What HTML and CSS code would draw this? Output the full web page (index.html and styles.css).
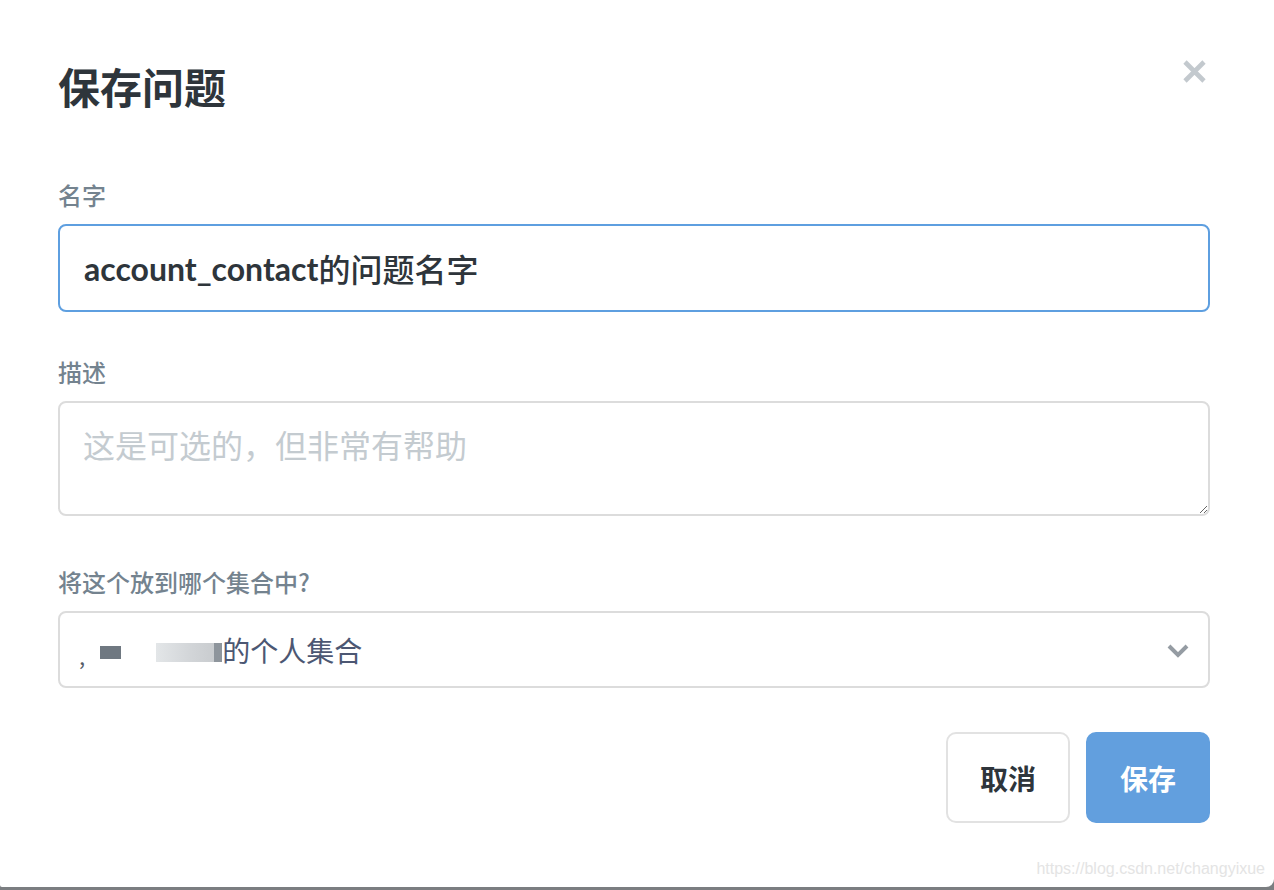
FILE: index.html
```html
<!DOCTYPE html>
<html lang="zh-CN">
<head>
<meta charset="utf-8">
<title>保存问题</title>
<link rel="stylesheet" href="styles.css">
</head>
<body>
<div class="modal">
  <div class="header">
    <h1 class="title">保存问题</h1>
    <svg class="close" width="23" height="23" viewBox="0 0 23 23" aria-label="关闭">
      <path d="M2 2 L21 21 M21 2 L2 21" stroke="#c3c9ce" stroke-width="4.6" fill="none"/>
    </svg>
  </div>
  <form class="form">
    <div class="field field-name">
      <label class="label">名字</label>
      <div class="input" contenteditable="true"><span class="latin">account_contact</span><span class="cjk">的问题名字</span></div>
    </div>
    <div class="field field-desc">
      <label class="label">描述</label>
      <textarea class="textarea" placeholder="这是可选的，但非常有帮助"></textarea>
    </div>
    <div class="field field-coll">
      <label class="label">将这个放到哪个集合中?</label>
      <div class="select">
        <span class="select-value"><span class="blur-comma">,</span><span class="blur-a"></span><span class="blur-b"></span><span class="blur-c"></span>的个人集合</span>
        <svg class="chevron" width="22" height="14" viewBox="0 0 22 14">
          <path d="M2 2 L11 11 L20 2" stroke="#959ca3" stroke-width="4" fill="none"/>
        </svg>
      </div>
    </div>
    <div class="actions">
      <button type="button" class="btn btn-cancel">取消</button>
      <button type="button" class="btn btn-save">保存</button>
    </div>
  </form>
  <div class="watermark">https://blog.csdn.net/changyixue</div>
</div>
</body>
</html>
```

FILE: styles.css
```css
* { box-sizing: border-box; }
html, body { margin: 0; padding: 0; }
body {
  background: #7b7e81;
  font-family: "Lato", "Noto Sans CJK SC", sans-serif;
  width: 1274px;
  height: 890px;
  overflow: hidden;
}
.modal {
  position: relative;
  width: 1274px;
  height: 887px;
  background: #ffffff;
  border-radius: 0 0 8px 2px;
  padding: 62px 64px 0 58px;
}
.header {
  display: flex;
  justify-content: space-between;
  align-items: flex-start;
}
.title {
  margin: 0;
  font-size: 42px;
  line-height: 48px;
  font-weight: 700;
  color: #2e353b;
  font-family: "Noto Sans CJK SC", sans-serif;
}
.close {
  margin-top: -2px;
  margin-right: 4px;
  display: block;
}
.form {
  display: flex;
  flex-direction: column;
}
.field { display: flex; flex-direction: column; }
.field-name { margin-top: 70px; }
.field-desc { margin-top: 45px; }
.field-coll { margin-top: 51px; }
.label {
  font-family: "Noto Sans CJK SC", sans-serif;
  font-size: 24px;
  line-height: 30px;
  font-weight: 500;
  color: #74838f;
  margin-bottom: 14px;
}
.input {
  height: 88px;
  border: 2px solid #5e9fe0;
  border-radius: 8px;
  padding: 0 24px;
  display: flex;
  align-items: center;
  font-size: 32px;
  color: #2e353b;
  outline: none;
  width: 100%;
  white-space: nowrap;
}
.latin {
  font-family: "Lato", sans-serif;
  font-weight: 700;
}
.cjk {
  font-family: "Noto Sans CJK SC", sans-serif;
  font-weight: 500;
  font-size: 32px;
}
.textarea {
  height: 115px;
  border: 2px solid #dcdcdc;
  border-radius: 8px;
  padding: 21px 23px;
  font-family: "Noto Sans CJK SC", sans-serif;
  font-size: 32px;
  line-height: 40px;
  color: #2e353b;
  outline: none;
  width: 100%;
  display: block;
}
.textarea::placeholder { color: #c4cbd0; }
.select {
  height: 77px;
  border: 2px solid #dcdcdc;
  border-radius: 8px;
  display: flex;
  align-items: center;
  justify-content: space-between;
  padding: 0 19px 0 19px;
}
.select-value {
  font-family: "Noto Sans CJK SC", sans-serif;
  font-size: 28px;
  color: #4c5773;
  display: flex;
  align-items: center;
  line-height: 36px;
}
.blur-comma { color: #555c66; margin-right: 15px; margin-top: 10px; font-size: 22px; }
.blur-a { display: inline-block; width: 21px; height: 13px; background: #6f7881; margin-right: 35px; margin-top: 6px; }
.blur-b { display: inline-block; width: 58px; height: 19px; background: linear-gradient(90deg, #e3e6e8, #d2d5d8 60%, #c9cccf); margin-top: 6px; }
.blur-c { display: inline-block; width: 8px; height: 19px; background: #8e959c; margin-top: 6px; margin-right: 0; }
.chevron { display: block; margin-top: 2px; }
.actions {
  margin-top: 44px;
  display: flex;
  justify-content: flex-end;
  gap: 16px;
}
.btn {
  width: 124px;
  height: 91px;
  border-radius: 10px;
  font-family: "Noto Sans CJK SC", sans-serif;
  font-size: 28px;
  font-weight: 700;
  cursor: pointer;
}
.btn-cancel {
  background: #ffffff;
  border: 2px solid #e2e2e2;
  color: #2e353b;
}
.btn-save {
  background: #629fde;
  border: 2px solid #629fde;
  color: #ffffff;
}
.watermark {
  position: absolute;
  right: 9px;
  bottom: 9px;
  font-family: "Liberation Sans", Arial, sans-serif;
  font-size: 16px;
  color: #e4e4e4;
}
```
